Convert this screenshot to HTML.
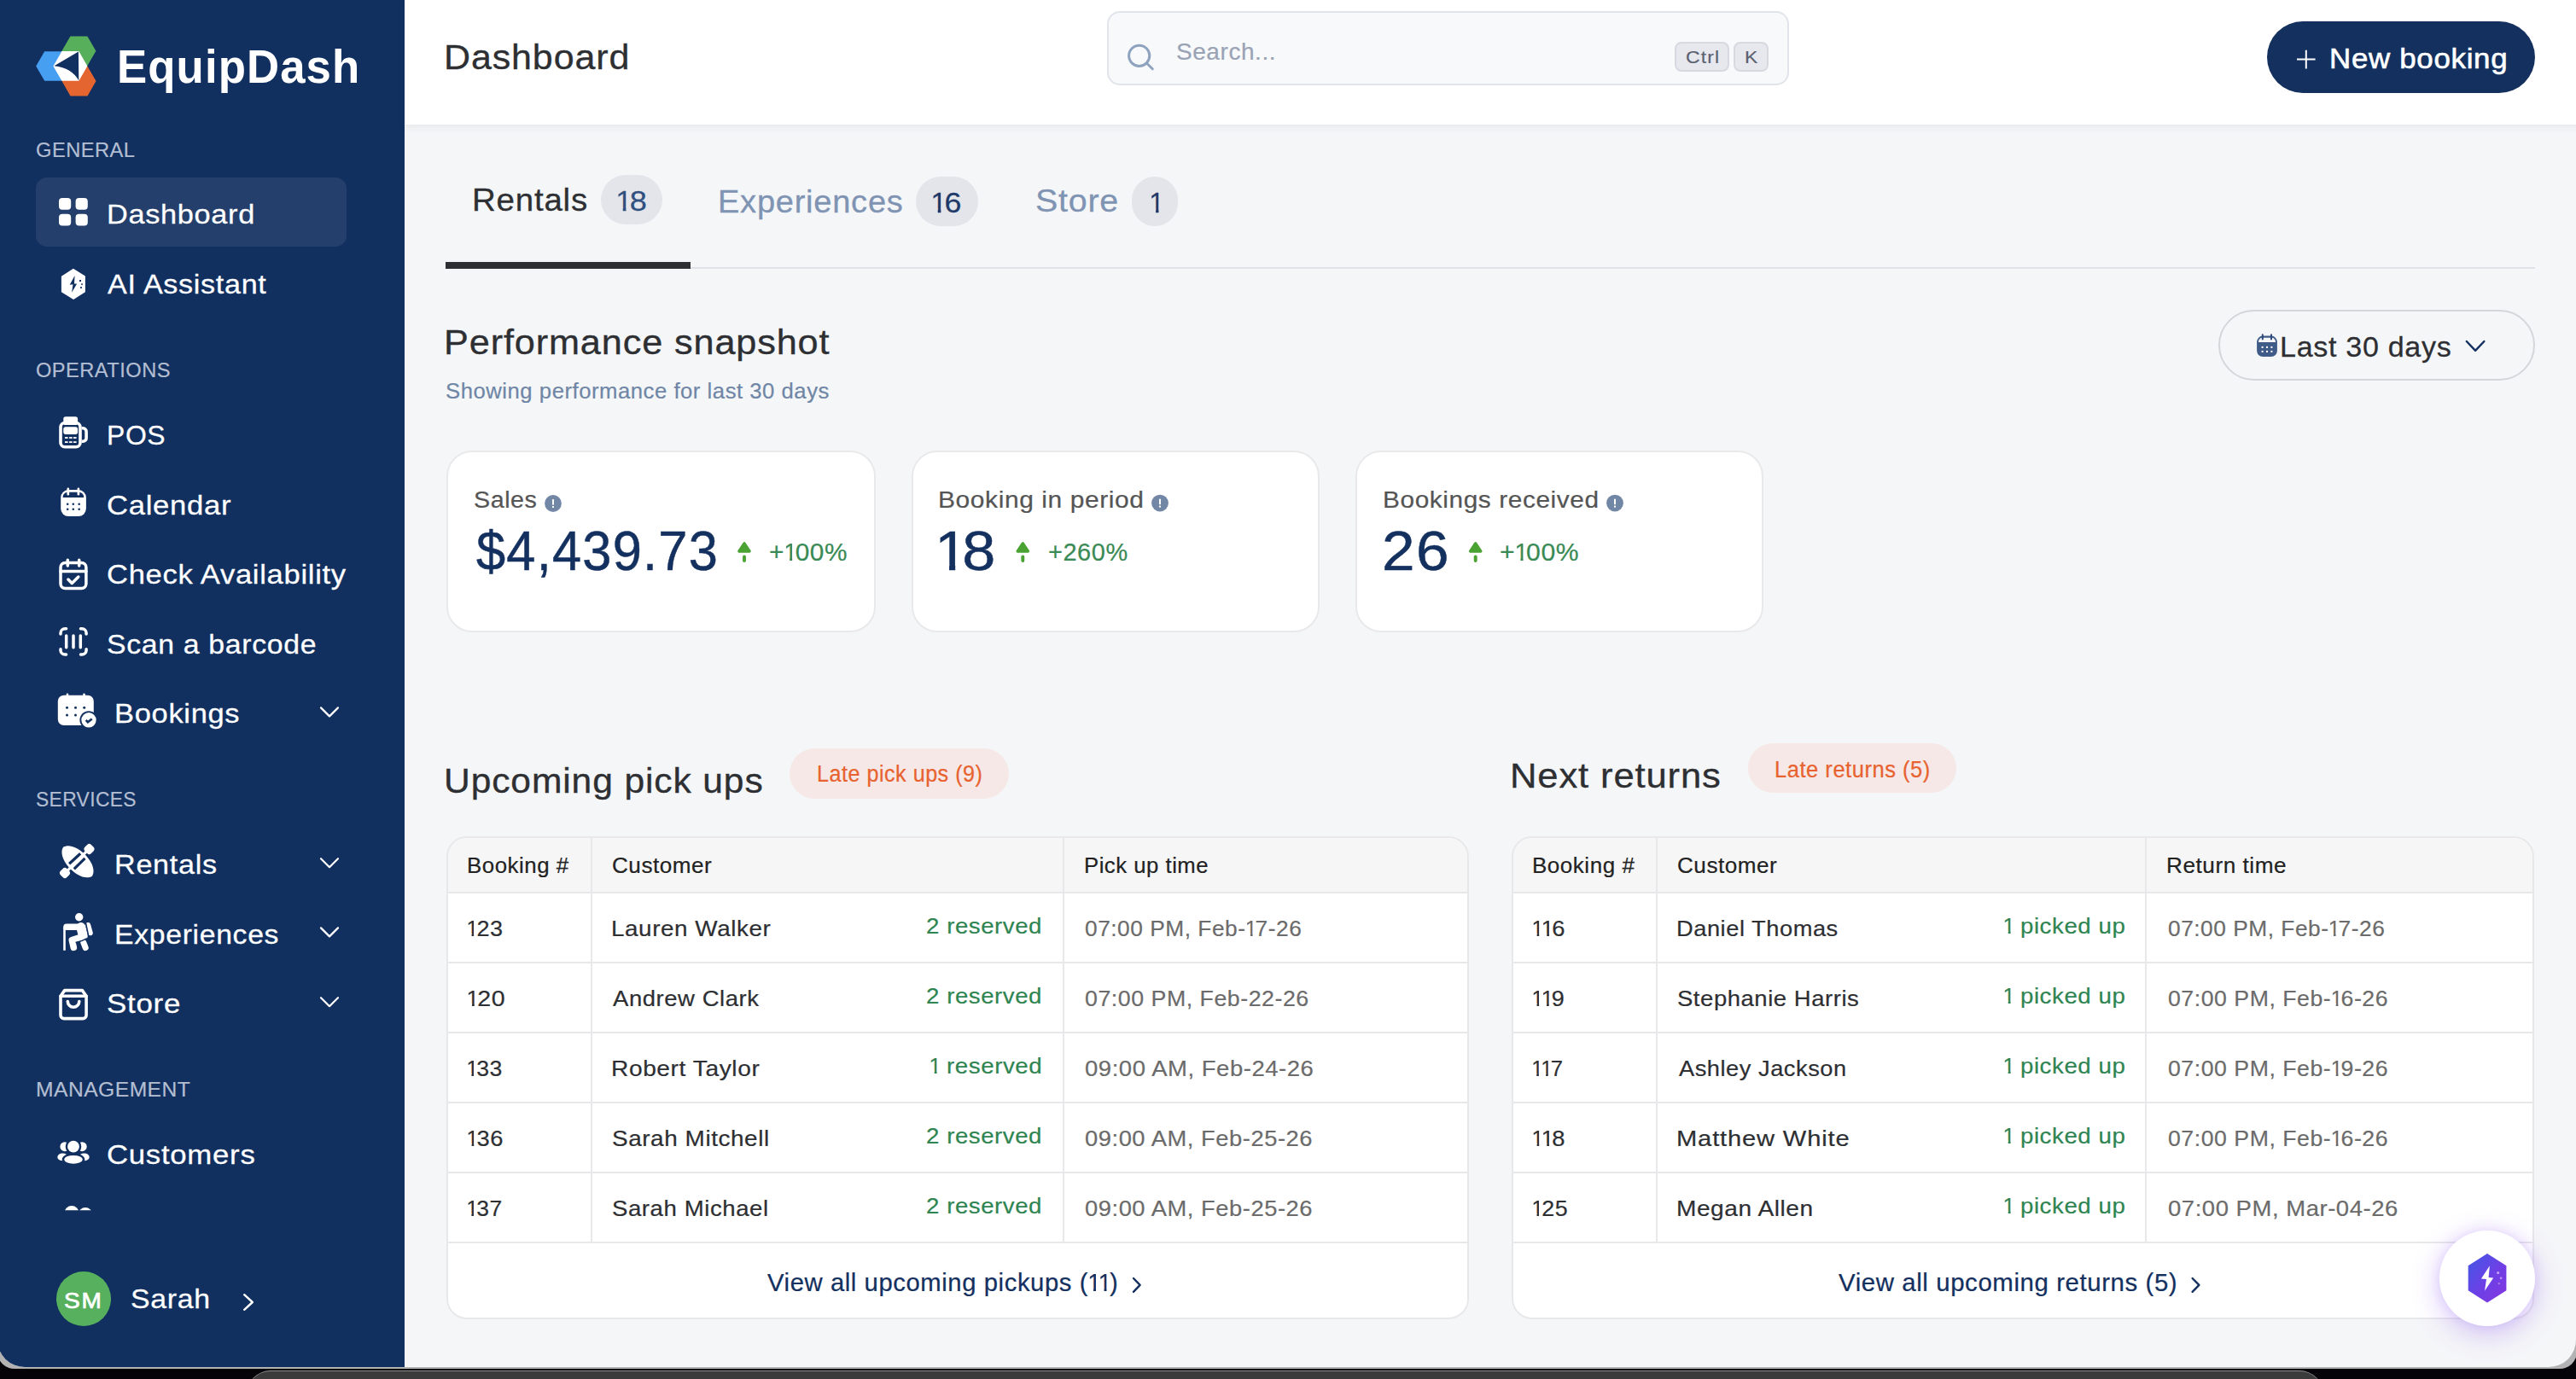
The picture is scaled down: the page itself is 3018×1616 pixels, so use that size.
<!DOCTYPE html>
<html><head><meta charset="utf-8"><title>EquipDash</title>
<style>
*{box-sizing:border-box}
html,body{margin:0;padding:0}
body{width:3018px;height:1616px;overflow:hidden;position:relative;background:#050308;font-family:"Liberation Sans",sans-serif}
.a{position:absolute}
.t{position:absolute;white-space:nowrap;line-height:1;transform-origin:0 50%}
.app{position:absolute;left:-3px;top:0;width:3021.4px;height:1601.5px;overflow:hidden;border-radius:0 0 32px 32px;background:#f5f6f8}
.in{position:absolute;left:3px;top:0;width:3030px;height:1616px}
.o{display:inline-block;clip-path:polygon(0.09em 0,0.345em 0,0.345em 1em,0.243em 1em,0.243em 0.72em,0.09em 0.72em)}
.card{position:absolute;background:#fff;border:2px solid #e9e9eb;border-radius:30px}
.tbl{position:absolute;background:#fff;border:2px solid #e8e8ea;border-radius:24px;overflow:hidden}
.ln{position:absolute;background:#e8e8ea}
.key{position:absolute;background:#e6e8ed;border:2px solid #d6d9e0;border-radius:8px}
.badge{position:absolute;background:#e3e5ea;border-radius:30px}
.pill{position:absolute;background:#f5e8e6;border-radius:30px}
</style></head>
<body>
<div class="a" style="left:289px;top:1605.5px;width:2433px;height:30px;background:#3b3b3b;border-top:1.5px solid #8d8d8d;border-radius:28px 28px 0 0"></div>
<div class="a" style="left:-3px;top:1540px;width:3021.6px;height:63.6px;background:#b3b3b3;border-radius:0 0 20px 20px"></div>
<div class="app"><div class="in">
<!-- sidebar -->
<div class="a" style="left:-3px;top:0;width:477px;height:1602px;background:#12305f"></div>
<div class="a" style="left:42px;top:208px;width:363.5px;height:80.75px;border-radius:13px;background:#243f6b"></div>
<div class="a" style="left:65.8px;top:1489.8px;width:64.2px;height:64.2px;border-radius:50%;background:#57b05e"></div>
<!-- header -->
<div class="a" style="left:474px;top:0;width:2560px;height:145.6px;background:#fff;box-shadow:0 3px 9px rgba(40,50,70,.075)"></div>
<div class="a" style="left:1296.7px;top:13.3px;width:799.3px;height:86.7px;border:2px solid #e1e4ea;background:#f8f9fb;border-radius:15px"></div>
<div class="key" style="left:1961.7px;top:49.3px;width:64.3px;height:35px"></div>
<div class="key" style="left:2031px;top:49.3px;width:41.3px;height:35px"></div>
<div class="a" style="left:2656px;top:25px;width:314px;height:83.6px;border-radius:42px;background:#14305f"></div>
<!-- tabs -->
<div class="a" style="left:522px;top:312.7px;width:2448px;height:2px;background:#dfe2e8"></div>
<div class="a" style="left:522px;top:307px;width:286.7px;height:7.7px;background:#2d2f33"></div>
<div class="badge" style="left:704px;top:205px;width:72.3px;height:57.7px"></div>
<div class="badge" style="left:1073.3px;top:207px;width:73px;height:57.7px"></div>
<div class="badge" style="left:1325.7px;top:206.7px;width:54.3px;height:58.3px"></div>
<div class="a" style="left:2598.5px;top:363.4px;width:371.5px;height:82.6px;border:2px solid #d4d6da;border-radius:42px"></div>
<!-- cards -->
<div class="card" style="left:523.3px;top:527.8px;width:502.5px;height:213.7px"></div>
<div class="card" style="left:1067.8px;top:527.8px;width:478px;height:213.7px"></div>
<div class="card" style="left:1588.2px;top:527.8px;width:477.8px;height:213.7px"></div>
<!-- pills -->
<div class="pill" style="left:924.8px;top:876.6px;width:257.2px;height:59.1px"></div>
<div class="pill" style="left:2047.7px;top:870.7px;width:244.6px;height:58.6px"></div>
<!-- table 1 -->
<div class="tbl" style="left:523.3px;top:980px;width:1197.4px;height:565.7px"></div>
<div class="a" style="left:525.3px;top:982px;width:1193.4px;height:63px;background:#f6f6f7;border-radius:22px 22px 0 0"></div>
<div class="ln" style="left:525.3px;top:1045px;width:1193.4px;height:2px"></div>
<div class="ln" style="left:525.3px;top:1127px;width:1193.4px;height:2px"></div>
<div class="ln" style="left:525.3px;top:1209px;width:1193.4px;height:2px"></div>
<div class="ln" style="left:525.3px;top:1291px;width:1193.4px;height:2px"></div>
<div class="ln" style="left:525.3px;top:1373px;width:1193.4px;height:2px"></div>
<div class="ln" style="left:525.3px;top:1455px;width:1193.4px;height:2px"></div>
<div class="ln" style="left:691.5px;top:982px;width:2px;height:474px"></div>
<div class="ln" style="left:1244.6px;top:982px;width:2px;height:474px"></div>
<!-- table 2 -->
<div class="tbl" style="left:1771px;top:980px;width:1198px;height:565.7px"></div>
<div class="a" style="left:1773px;top:982px;width:1194px;height:63px;background:#f6f6f7;border-radius:22px 22px 0 0"></div>
<div class="ln" style="left:1773px;top:1045px;width:1194px;height:2px"></div>
<div class="ln" style="left:1773px;top:1127px;width:1194px;height:2px"></div>
<div class="ln" style="left:1773px;top:1209px;width:1194px;height:2px"></div>
<div class="ln" style="left:1773px;top:1291px;width:1194px;height:2px"></div>
<div class="ln" style="left:1773px;top:1373px;width:1194px;height:2px"></div>
<div class="ln" style="left:1773px;top:1455px;width:1194px;height:2px"></div>
<div class="ln" style="left:1939.7px;top:982px;width:2px;height:474px"></div>
<div class="ln" style="left:2513.3px;top:982px;width:2px;height:474px"></div>
<!-- texts -->
<div class="t" style="left:136.97px;top:50.94px;font-size:55px;color:#ffffff;letter-spacing:1.100px;font-weight:700;transform:scaleX(0.9603400122746161);">EquipDash</div>
<div class="t" style="left:41.81px;top:164.26px;font-size:24.5px;color:#b3bed2;letter-spacing:0.490px;-webkit-text-stroke:0.2px #b3bed2;transform:scaleX(0.9661991688283569);">GENERAL</div>
<div class="t" style="left:125.19px;top:235.41px;font-size:32px;color:#ffffff;letter-spacing:0.640px;-webkit-text-stroke:0.26px #ffffff;transform:scaleX(1.071796852293494);">Dashboard</div>
<div class="t" style="left:126.18px;top:317.41px;font-size:32px;color:#ffffff;letter-spacing:0.640px;-webkit-text-stroke:0.26px #ffffff;transform:scaleX(1.0665171817786545);">AI Assistant</div>
<div class="t" style="left:41.88px;top:422.26px;font-size:24.5px;color:#b3bed2;letter-spacing:0.490px;-webkit-text-stroke:0.2px #b3bed2;transform:scaleX(0.9645660202229043);">OPERATIONS</div>
<div class="t" style="left:125.39px;top:493.91px;font-size:32px;color:#ffffff;letter-spacing:0.640px;-webkit-text-stroke:0.26px #ffffff;transform:scaleX(0.9959178946758924);">POS</div>
<div class="t" style="left:124.99px;top:575.91px;font-size:32px;color:#ffffff;letter-spacing:0.640px;-webkit-text-stroke:0.26px #ffffff;transform:scaleX(1.0837238111899685);">Calendar</div>
<div class="t" style="left:124.99px;top:657.41px;font-size:32px;color:#ffffff;letter-spacing:0.640px;-webkit-text-stroke:0.26px #ffffff;transform:scaleX(1.0801027698861914);">Check Availability</div>
<div class="t" style="left:125.22px;top:738.91px;font-size:32px;color:#ffffff;letter-spacing:0.640px;-webkit-text-stroke:0.26px #ffffff;transform:scaleX(1.0561789188865478);">Scan a barcode</div>
<div class="t" style="left:134.17px;top:820.41px;font-size:32px;color:#ffffff;letter-spacing:0.640px;-webkit-text-stroke:0.26px #ffffff;transform:scaleX(1.0767770363128888);">Bookings</div>
<div class="t" style="left:41.97px;top:924.76px;font-size:24.5px;color:#b3bed2;letter-spacing:0.423px;-webkit-text-stroke:0.2px #b3bed2;transform:scaleX(0.93);">SERVICES</div>
<div class="t" style="left:134.20px;top:997.16px;font-size:32px;color:#ffffff;letter-spacing:0.640px;-webkit-text-stroke:0.26px #ffffff;transform:scaleX(1.0685458334772646);">Rentals</div>
<div class="t" style="left:134.23px;top:1078.66px;font-size:32px;color:#ffffff;letter-spacing:0.640px;-webkit-text-stroke:0.26px #ffffff;transform:scaleX(1.0547667342799187);">Experiences</div>
<div class="t" style="left:125.16px;top:1160.41px;font-size:32px;color:#ffffff;letter-spacing:0.640px;-webkit-text-stroke:0.26px #ffffff;transform:scaleX(1.092958948396255);">Store</div>
<div class="t" style="left:41.73px;top:1264.76px;font-size:24.5px;color:#b3bed2;letter-spacing:0.490px;-webkit-text-stroke:0.2px #b3bed2;transform:scaleX(1.0046117540037545);">MANAGEMENT</div>
<div class="t" style="left:124.98px;top:1336.91px;font-size:32px;color:#ffffff;letter-spacing:0.640px;-webkit-text-stroke:0.26px #ffffff;transform:scaleX(1.0872896162249719);">Customers</div>
<div class="t" style="left:75.48px;top:1512.34px;font-size:25px;color:#ffffff;letter-spacing:1.624px;-webkit-text-stroke:0.7px #ffffff;transform:scaleX(1.12);">SM</div>
<div class="t" style="left:153.46px;top:1506.41px;font-size:32px;color:#ffffff;letter-spacing:0.640px;-webkit-text-stroke:0.26px #ffffff;transform:scaleX(1.0572217574460838);">Sarah</div>
<div class="t" style="left:520.47px;top:46.99px;font-size:41px;color:#2d2f33;letter-spacing:0.820px;-webkit-text-stroke:0.33px #2d2f33;transform:scaleX(1.0490609218980202);">Dashboard</div>
<div class="t" style="left:1377.73px;top:47.30px;font-size:28px;color:#9aa3b5;letter-spacing:0.560px;-webkit-text-stroke:0.22px #9aa3b5;transform:scaleX(0.9998724652467801);">Search...</div>
<div class="t" style="left:1974.83px;top:56.65px;font-size:20.5px;color:#5a6070;letter-spacing:0.977px;-webkit-text-stroke:0.16px #5a6070;transform:scaleX(1.12);">Ctrl</div>
<div class="t" style="left:2043.82px;top:56.65px;font-size:20.5px;color:#5a6070;letter-spacing:0.000px;-webkit-text-stroke:0.16px #5a6070;transform:scaleX(1.12);">K</div>
<div class="t" style="left:2728.64px;top:52.07px;font-size:33px;color:#ffffff;letter-spacing:0.660px;-webkit-text-stroke:0.6px #ffffff;transform:scaleX(1.056883354533485);">New booking</div>
<div class="t" style="left:552.54px;top:215.98px;font-size:37px;color:#2d2f33;letter-spacing:0.740px;-webkit-text-stroke:0.3px #2d2f33;transform:scaleX(1.04046289544925);">Rentals</div>
<div class="t" style="left:720.53px;top:219.37px;font-size:33px;color:#2f4f80;letter-spacing:0.660px;-webkit-text-stroke:0.26px #2f4f80;transform:scaleX(1.0946944710860762);"><span class="o" style="margin:0 -0.116em 0 0em">1</span>8</div>
<div class="t" style="left:840.88px;top:217.68px;font-size:37px;color:#7f93b3;letter-spacing:0.740px;-webkit-text-stroke:0.3px #7f93b3;transform:scaleX(1.0274040320118563);">Experiences</div>
<div class="t" style="left:1089.86px;top:221.07px;font-size:33px;color:#1f3a68;letter-spacing:0.660px;-webkit-text-stroke:0.26px #1f3a68;transform:scaleX(1.0849382886010923);"><span class="o" style="margin:0 -0.116em 0 0em">1</span>6</div>
<div class="t" style="left:1213.21px;top:217.38px;font-size:37px;color:#7f93b3;letter-spacing:0.740px;-webkit-text-stroke:0.3px #7f93b3;transform:scaleX(1.0638867846200524);">Store</div>
<div class="t" style="left:1345.80px;top:221.07px;font-size:33px;color:#1f3a68;letter-spacing:0.000px;-webkit-text-stroke:0.26px #1f3a68;transform:scaleX(1.0066019417475616);"><span class="o" style="margin:0 0em 0 0em">1</span></div>
<div class="t" style="left:520.45px;top:380.99px;font-size:41px;color:#2d2f33;letter-spacing:0.820px;-webkit-text-stroke:0.33px #2d2f33;transform:scaleX(1.0548213764156615);">Performance snapshot</div>
<div class="t" style="left:521.53px;top:445.29px;font-size:26px;color:#6f86a6;letter-spacing:0.520px;-webkit-text-stroke:0.21px #6f86a6;transform:scaleX(0.9884361853783973);">Showing performance for last 30 days</div>
<div class="t" style="left:2671.20px;top:389.77px;font-size:33px;color:#2d2f33;letter-spacing:0.660px;-webkit-text-stroke:0.26px #2d2f33;transform:scaleX(1.032624064607906);">Last 30 days</div>
<div class="t" style="left:555.40px;top:573.14px;font-size:27px;color:#555555;letter-spacing:0.540px;-webkit-text-stroke:0.22px #555555;transform:scaleX(1.0606587974829478);">Sales</div>
<div class="t" style="left:557.64px;top:613.28px;font-size:65px;color:#14305f;letter-spacing:1.300px;-webkit-text-stroke:0.52px #14305f;transform:scaleX(0.9438641126201501);">$4,439.73</div>
<div class="t" style="left:901.24px;top:632.75px;font-size:29px;color:#3a8a55;letter-spacing:0.580px;-webkit-text-stroke:0.23px #3a8a55;transform:scaleX(1.027658232372813);">+<span class="o" style="margin:0 -0.116em 0 -0.036em">1</span>00%</div>
<div class="t" style="left:1099.24px;top:573.14px;font-size:27px;color:#555555;letter-spacing:0.540px;-webkit-text-stroke:0.22px #555555;transform:scaleX(1.1090217510318525);">Booking in period</div>
<div class="t" style="left:1094.94px;top:613.28px;font-size:65px;color:#14305f;letter-spacing:1.300px;-webkit-text-stroke:0.52px #14305f;transform:scaleX(1.0806239956691697);"><span class="o" style="margin:0 -0.116em 0 0em">1</span>8</div>
<div class="t" style="left:1227.89px;top:632.75px;font-size:29px;color:#3a8a55;letter-spacing:0.580px;-webkit-text-stroke:0.23px #3a8a55;transform:scaleX(0.9969260388063187);">+260%</div>
<div class="t" style="left:1619.86px;top:573.14px;font-size:27px;color:#555555;letter-spacing:0.540px;-webkit-text-stroke:0.22px #555555;transform:scaleX(1.1037363647805418);">Bookings received</div>
<div class="t" style="left:1618.81px;top:613.28px;font-size:65px;color:#14305f;letter-spacing:1.300px;-webkit-text-stroke:0.52px #14305f;transform:scaleX(1.0668719530812498);">26</div>
<div class="t" style="left:1756.83px;top:632.75px;font-size:29px;color:#3a8a55;letter-spacing:0.580px;-webkit-text-stroke:0.23px #3a8a55;transform:scaleX(1.0392049540848671);">+<span class="o" style="margin:0 -0.116em 0 -0.036em">1</span>00%</div>
<div class="t" style="left:520.01px;top:894.69px;font-size:41px;color:#2d2f33;letter-spacing:0.820px;-webkit-text-stroke:0.33px #2d2f33;transform:scaleX(1.0395470474558408);">Upcoming pick ups</div>
<div class="t" style="left:956.64px;top:894.14px;font-size:27px;color:#e8622f;letter-spacing:0.540px;-webkit-text-stroke:0.22px #e8622f;transform:scaleX(0.9311988644438439);">Late pick ups (9)</div>
<div class="t" style="left:1768.73px;top:888.59px;font-size:41px;color:#2d2f33;letter-spacing:0.820px;-webkit-text-stroke:0.33px #2d2f33;transform:scaleX(1.0624746831345848);">Next returns</div>
<div class="t" style="left:2078.60px;top:888.84px;font-size:27px;color:#e8622f;letter-spacing:0.540px;-webkit-text-stroke:0.22px #e8622f;transform:scaleX(0.9459515796083416);">Late returns (5)</div>
<div class="t" style="left:546.88px;top:1001.29px;font-size:26px;color:#222222;letter-spacing:0.520px;-webkit-text-stroke:0.21px #222222;transform:scaleX(0.9952662383707832);">Booking #</div>
<div class="t" style="left:716.97px;top:1001.29px;font-size:26px;color:#222222;letter-spacing:0.520px;-webkit-text-stroke:0.21px #222222;transform:scaleX(1.0035677104816239);">Customer</div>
<div class="t" style="left:1269.59px;top:1001.29px;font-size:26px;color:#222222;letter-spacing:0.520px;-webkit-text-stroke:0.21px #222222;transform:scaleX(0.9879111810659755);">Pick up time</div>
<div class="t" style="left:546.40px;top:1075.29px;font-size:26px;color:#2d2f33;letter-spacing:0.520px;-webkit-text-stroke:0.21px #2d2f33;transform:scaleX(1.0404685252272858);"><span class="o" style="margin:0 -0.116em 0 0em">1</span>23</div>
<div class="t" style="left:716.02px;top:1075.29px;font-size:26px;color:#2d2f33;letter-spacing:0.520px;-webkit-text-stroke:0.21px #2d2f33;transform:scaleX(1.0710093963430523);">Lauren Walker</div>
<div class="t" style="left:1085.31px;top:1071.57px;font-size:26.5px;color:#2f8552;letter-spacing:0.530px;-webkit-text-stroke:0.21px #2f8552;transform:scaleX(1.0422874573401353);">2 reserved</div>
<div class="t" style="left:1270.67px;top:1075.29px;font-size:26px;color:#6b6b6b;letter-spacing:0.520px;-webkit-text-stroke:0.21px #6b6b6b;transform:scaleX(1.0105105675179311);">07:00 PM, Feb-<span class="o" style="margin:0 -0.116em 0 -0.036em">1</span>7-26</div>
<div class="t" style="left:546.25px;top:1157.29px;font-size:26px;color:#2d2f33;letter-spacing:0.520px;-webkit-text-stroke:0.21px #2d2f33;transform:scaleX(1.1003103487016594);"><span class="o" style="margin:0 -0.116em 0 0em">1</span>20</div>
<div class="t" style="left:718.25px;top:1157.29px;font-size:26px;color:#2d2f33;letter-spacing:0.520px;-webkit-text-stroke:0.21px #2d2f33;transform:scaleX(1.0570575907557687);">Andrew Clark</div>
<div class="t" style="left:1085.31px;top:1153.57px;font-size:26.5px;color:#2f8552;letter-spacing:0.530px;-webkit-text-stroke:0.21px #2f8552;transform:scaleX(1.0422874573401353);">2 reserved</div>
<div class="t" style="left:1270.66px;top:1157.29px;font-size:26px;color:#6b6b6b;letter-spacing:0.520px;-webkit-text-stroke:0.21px #6b6b6b;transform:scaleX(1.028054329952925);">07:00 PM, Feb-22-26</div>
<div class="t" style="left:546.44px;top:1239.29px;font-size:26px;color:#2d2f33;letter-spacing:0.520px;-webkit-text-stroke:0.21px #2d2f33;transform:scaleX(1.0245835095749634);"><span class="o" style="margin:0 -0.116em 0 0em">1</span>33</div>
<div class="t" style="left:715.99px;top:1239.29px;font-size:26px;color:#2d2f33;letter-spacing:0.520px;-webkit-text-stroke:0.21px #2d2f33;transform:scaleX(1.08343187738925);">Robert Taylor</div>
<div class="t" style="left:1088.03px;top:1235.57px;font-size:26.5px;color:#2f8552;letter-spacing:0.530px;-webkit-text-stroke:0.21px #2f8552;transform:scaleX(1.0459025693392325);"><span class="o" style="margin:0 -0.116em 0 0em">1</span> reserved</div>
<div class="t" style="left:1270.63px;top:1239.29px;font-size:26px;color:#6b6b6b;letter-spacing:0.520px;-webkit-text-stroke:0.21px #6b6b6b;transform:scaleX(1.0562004335178852);">09:00 AM, Feb-24-26</div>
<div class="t" style="left:546.37px;top:1321.29px;font-size:26px;color:#2d2f33;letter-spacing:0.520px;-webkit-text-stroke:0.21px #2d2f33;transform:scaleX(1.0510585356621716);"><span class="o" style="margin:0 -0.116em 0 0em">1</span>36</div>
<div class="t" style="left:717.03px;top:1321.29px;font-size:26px;color:#2d2f33;letter-spacing:0.520px;-webkit-text-stroke:0.21px #2d2f33;transform:scaleX(1.073709548775972);">Sarah Mitchell</div>
<div class="t" style="left:1085.31px;top:1317.57px;font-size:26.5px;color:#2f8552;letter-spacing:0.530px;-webkit-text-stroke:0.21px #2f8552;transform:scaleX(1.0422874573401353);">2 reserved</div>
<div class="t" style="left:1270.63px;top:1321.29px;font-size:26px;color:#6b6b6b;letter-spacing:0.520px;-webkit-text-stroke:0.21px #6b6b6b;transform:scaleX(1.0510307777815402);">09:00 AM, Feb-25-26</div>
<div class="t" style="left:546.45px;top:1403.29px;font-size:26px;color:#2d2f33;letter-spacing:0.520px;-webkit-text-stroke:0.21px #2d2f33;transform:scaleX(1.0184434999023593);"><span class="o" style="margin:0 -0.116em 0 0em">1</span>37</div>
<div class="t" style="left:717.05px;top:1403.29px;font-size:26px;color:#2d2f33;letter-spacing:0.520px;-webkit-text-stroke:0.21px #2d2f33;transform:scaleX(1.0618015509491925);">Sarah Michael</div>
<div class="t" style="left:1085.31px;top:1399.57px;font-size:26.5px;color:#2f8552;letter-spacing:0.530px;-webkit-text-stroke:0.21px #2f8552;transform:scaleX(1.0422874573401353);">2 reserved</div>
<div class="t" style="left:1270.63px;top:1403.29px;font-size:26px;color:#6b6b6b;letter-spacing:0.520px;-webkit-text-stroke:0.21px #6b6b6b;transform:scaleX(1.0510307777815402);">09:00 AM, Feb-25-26</div>
<div class="t" style="left:898.87px;top:1488.75px;font-size:29px;color:#14305f;letter-spacing:0.580px;-webkit-text-stroke:0.23px #14305f;transform:scaleX(1.0081933439535498);">View all upcoming pickups (<span class="o" style="margin:0 -0.116em 0 -0.036em">1</span><span class="o" style="margin:0 -0.116em 0 -0.036em">1</span>)</div>
<div class="t" style="left:1794.57px;top:1001.29px;font-size:26px;color:#222222;letter-spacing:0.520px;-webkit-text-stroke:0.21px #222222;transform:scaleX(1.000370167798325);">Booking #</div>
<div class="t" style="left:1965.37px;top:1001.29px;font-size:26px;color:#222222;letter-spacing:0.520px;-webkit-text-stroke:0.21px #222222;transform:scaleX(1.0035677104816219);">Customer</div>
<div class="t" style="left:2537.85px;top:1001.29px;font-size:26px;color:#222222;letter-spacing:0.520px;-webkit-text-stroke:0.21px #222222;transform:scaleX(1.0073179923452698);">Return time</div>
<div class="t" style="left:1794.07px;top:1075.29px;font-size:26px;color:#2d2f33;letter-spacing:0.520px;-webkit-text-stroke:0.21px #2d2f33;transform:scaleX(1.0517120209012967);"><span class="o" style="margin:0 -0.116em 0 0em">1</span><span class="o" style="margin:0 -0.116em 0 -0.036em">1</span>6</div>
<div class="t" style="left:1964.47px;top:1075.29px;font-size:26px;color:#2d2f33;letter-spacing:0.520px;-webkit-text-stroke:0.21px #2d2f33;transform:scaleX(1.047542907327563);">Daniel Thomas</div>
<div class="t" style="left:2346.34px;top:1071.57px;font-size:26.5px;color:#2f8552;letter-spacing:0.530px;-webkit-text-stroke:0.21px #2f8552;transform:scaleX(1.0437002142948926);"><span class="o" style="margin:0 -0.116em 0 0em">1</span> picked up</div>
<div class="t" style="left:2539.67px;top:1075.29px;font-size:26px;color:#6b6b6b;letter-spacing:0.520px;-webkit-text-stroke:0.21px #6b6b6b;transform:scaleX(1.010510567517933);">07:00 PM, Feb-<span class="o" style="margin:0 -0.116em 0 -0.036em">1</span>7-26</div>
<div class="t" style="left:1794.11px;top:1157.29px;font-size:26px;color:#2d2f33;letter-spacing:0.520px;-webkit-text-stroke:0.21px #2d2f33;transform:scaleX(1.0367082661285658);"><span class="o" style="margin:0 -0.116em 0 0em">1</span><span class="o" style="margin:0 -0.116em 0 -0.036em">1</span>9</div>
<div class="t" style="left:1965.45px;top:1157.29px;font-size:26px;color:#2d2f33;letter-spacing:0.520px;-webkit-text-stroke:0.21px #2d2f33;transform:scaleX(1.0565069013257882);">Stephanie Harris</div>
<div class="t" style="left:2346.34px;top:1153.57px;font-size:26.5px;color:#2f8552;letter-spacing:0.530px;-webkit-text-stroke:0.21px #2f8552;transform:scaleX(1.0437002142948926);"><span class="o" style="margin:0 -0.116em 0 0em">1</span> picked up</div>
<div class="t" style="left:2539.66px;top:1157.29px;font-size:26px;color:#6b6b6b;letter-spacing:0.520px;-webkit-text-stroke:0.21px #6b6b6b;transform:scaleX(1.0253710170402548);">07:00 PM, Feb-<span class="o" style="margin:0 -0.116em 0 -0.036em">1</span>6-26</div>
<div class="t" style="left:1794.23px;top:1239.29px;font-size:26px;color:#2d2f33;letter-spacing:0.520px;-webkit-text-stroke:0.21px #2d2f33;transform:scaleX(0.9885843372096785);"><span class="o" style="margin:0 -0.116em 0 0em">1</span><span class="o" style="margin:0 -0.116em 0 -0.036em">1</span>7</div>
<div class="t" style="left:1966.65px;top:1239.29px;font-size:26px;color:#2d2f33;letter-spacing:0.520px;-webkit-text-stroke:0.21px #2d2f33;transform:scaleX(1.0464409063875415);">Ashley Jackson</div>
<div class="t" style="left:2346.34px;top:1235.57px;font-size:26.5px;color:#2f8552;letter-spacing:0.530px;-webkit-text-stroke:0.21px #2f8552;transform:scaleX(1.0437002142948926);"><span class="o" style="margin:0 -0.116em 0 0em">1</span> picked up</div>
<div class="t" style="left:2539.66px;top:1239.29px;font-size:26px;color:#6b6b6b;letter-spacing:0.520px;-webkit-text-stroke:0.21px #6b6b6b;transform:scaleX(1.0253710170402548);">07:00 PM, Feb-<span class="o" style="margin:0 -0.116em 0 -0.036em">1</span>9-26</div>
<div class="t" style="left:1794.07px;top:1321.29px;font-size:26px;color:#2d2f33;letter-spacing:0.520px;-webkit-text-stroke:0.21px #2d2f33;transform:scaleX(1.0513177232215958);"><span class="o" style="margin:0 -0.116em 0 0em">1</span><span class="o" style="margin:0 -0.116em 0 -0.036em">1</span>8</div>
<div class="t" style="left:1964.31px;top:1321.29px;font-size:26px;color:#2d2f33;letter-spacing:0.751px;-webkit-text-stroke:0.21px #2d2f33;transform:scaleX(1.12);">Matthew White</div>
<div class="t" style="left:2346.34px;top:1317.57px;font-size:26.5px;color:#2f8552;letter-spacing:0.530px;-webkit-text-stroke:0.21px #2f8552;transform:scaleX(1.0437002142948926);"><span class="o" style="margin:0 -0.116em 0 0em">1</span> picked up</div>
<div class="t" style="left:2539.66px;top:1321.29px;font-size:26px;color:#6b6b6b;letter-spacing:0.520px;-webkit-text-stroke:0.21px #6b6b6b;transform:scaleX(1.0253710170402548);">07:00 PM, Feb-<span class="o" style="margin:0 -0.116em 0 -0.036em">1</span>6-26</div>
<div class="t" style="left:1794.12px;top:1403.29px;font-size:26px;color:#2d2f33;letter-spacing:0.520px;-webkit-text-stroke:0.21px #2d2f33;transform:scaleX(1.0311397171595322);"><span class="o" style="margin:0 -0.116em 0 0em">1</span>25</div>
<div class="t" style="left:1964.40px;top:1403.29px;font-size:26px;color:#2d2f33;letter-spacing:0.520px;-webkit-text-stroke:0.21px #2d2f33;transform:scaleX(1.07967379447105);">Megan Allen</div>
<div class="t" style="left:2346.34px;top:1399.57px;font-size:26.5px;color:#2f8552;letter-spacing:0.530px;-webkit-text-stroke:0.21px #2f8552;transform:scaleX(1.0437002142948926);"><span class="o" style="margin:0 -0.116em 0 0em">1</span> picked up</div>
<div class="t" style="left:2539.63px;top:1403.29px;font-size:26px;color:#6b6b6b;letter-spacing:0.520px;-webkit-text-stroke:0.21px #6b6b6b;transform:scaleX(1.055863182672425);">07:00 PM, Mar-04-26</div>
<div class="t" style="left:2154.17px;top:1488.75px;font-size:29px;color:#14305f;letter-spacing:0.580px;-webkit-text-stroke:0.23px #14305f;transform:scaleX(1.0137526481743595);">View all upcoming returns (5)</div>
<!-- FAB -->
<div class="a" style="left:2858.2px;top:1442.2px;width:111.7px;height:111.7px;border-radius:50%;background:#fff;box-shadow:0 8px 34px rgba(124,58,237,.30),0 0 14px rgba(124,58,237,.12)"></div>
<svg class="a" style="left:0;top:0" width="3018" height="1616" viewBox="0 0 3018 1616">
<defs>
<linearGradient id="fg" x1="0" y1="0" x2="1" y2="1"><stop offset="0" stop-color="#4058e4"/><stop offset=".55" stop-color="#6f3fe6"/><stop offset="1" stop-color="#8436de"/></linearGradient>
<clipPath id="clipnext"><rect x="60" y="1405" width="80" height="13.2"/></clipPath>
</defs>
<!-- logo -->
<g>
<polygon points="42.2,77.5 52.2,60.2 72.2,60.2 82.2,77.5 72.2,94.8 52.2,94.8" fill="#479ff2"/>
<polygon points="72.4,59.75 82.4,42.4 102.4,42.4 112.4,59.75 102.4,77.1 82.4,77.1" fill="#57ae5b"/>
<polygon points="72.5,95.1 82.5,77.8 102.5,77.8 112.5,95.1 102.5,112.4 82.5,112.4" fill="#e56531"/>
<polygon points="62.4,77.4 72.4,60.1 92.4,60.1 102.4,77.4 92.4,94.7 72.4,94.7" fill="#fff"/>
<path d="M63.4,77.3 L91.9,60.6 L92.3,94.6 Q84.5,79.8 63.4,77.3 Z" fill="#12305f"/>
</g>
<!-- dashboard icon -->
<g fill="#fff">
<rect x="69" y="232" width="14.2" height="13.8" rx="4"/><rect x="88.6" y="232" width="14.2" height="13.8" rx="4"/>
<rect x="69" y="250.7" width="14.2" height="13.8" rx="4"/><rect x="88.6" y="250.7" width="14.2" height="13.8" rx="4"/>
</g>
<!-- AI icon -->
<polygon points="85.9,314.8 99.9,323.5 99.9,342.2 86.1,351 71.9,342.2 71.9,323.8" fill="#fff"/>
<polygon points="87.6,323 81.7,333.7 85.5,333.3 84.1,342.8 90.1,332.4 87,332.4" fill="#12305f"/>
<rect x="93" y="328" width="2" height="2" fill="#12305f"/><rect x="95" y="332.1" width="2" height="2" fill="#5a6e93"/><rect x="94" y="336" width="2" height="2" fill="#3a5380"/>
<!-- POS -->
<g>
<rect x="74.3" y="488.2" width="16.8" height="9.8" rx="2.6" fill="#fff"/>
<rect x="71" y="495.5" width="23" height="28.3" rx="5" fill="none" stroke="#fff" stroke-width="3.6"/>
<rect x="74.3" y="500.2" width="16.8" height="8.7" rx="2.6" fill="#fff"/>
<g fill="#fff"><rect x="76" y="512.1" width="3.6" height="1.8"/><rect x="81.1" y="512.1" width="3.6" height="1.8"/><rect x="86" y="512.1" width="3.6" height="1.8"/>
<rect x="76" y="517.2" width="3.6" height="1.8"/><rect x="81.1" y="517.2" width="3.6" height="1.8"/><rect x="86" y="517.2" width="3.6" height="1.8"/></g>
<path d="M95.8,501.8 h1.5 a3.8,3.8 0 0 1 3.8,3.8 v7.8 a3.8,3.8 0 0 1 -3.8,3.8 h-1.5" fill="none" stroke="#fff" stroke-width="3.6"/>
</g>
<!-- Calendar -->
<g>
<rect x="71.2" y="574.1" width="29.7" height="31" rx="9" fill="#fff"/>
<path d="M73.6,583 v-0.6 a5.6,5.6 0 0 1 5.6,-5.6 h13.4 a5.6,5.6 0 0 1 5.6,5.6 v0.6 Z" fill="#12305f"/>
<path d="M79.8,572.9 V579.2 M91.9,572.9 V579.2" stroke="#fff" stroke-width="2.7" stroke-linecap="round"/>
<g fill="#12305f"><circle cx="79.2" cy="590.8" r="1.3"/><circle cx="85.8" cy="590.8" r="1.3"/><circle cx="92.7" cy="590.8" r="1.3"/><circle cx="79.2" cy="596.7" r="1.3"/><circle cx="85.8" cy="596.7" r="1.3"/><circle cx="92.7" cy="596.7" r="1.3"/></g>
</g>
<!-- Check availability -->
<g fill="none" stroke="#fff" stroke-width="3.5" stroke-linecap="round" stroke-linejoin="round">
<rect x="71" y="659.5" width="29.9" height="30.1" rx="5.5"/>
<path d="M71,669.6 H100.9 M79.3,656.2 V663 M92.7,656.2 V663"/>
<path d="M79.9,679 L84.3,683.5 L91.8,676.1"/>
</g>
<!-- Scan -->
<g fill="none" stroke="#fff" stroke-width="3.5" stroke-linecap="round">
<path d="M71,743 V742 A5.2,5.2 0 0 1 76.2,736.8 H77.6"/>
<path d="M94.5,736.8 H95.9 A5.2,5.2 0 0 1 101.1,742 V743"/>
<path d="M71,760.8 V761.8 A5.2,5.2 0 0 0 76.2,767 H77.6"/>
<path d="M94.5,767 H95.9 A5.2,5.2 0 0 0 101.1,761.8 V760.8"/>
<path d="M77.7,745 V758.8 M86,745 V758.8 M94.3,745 V758.8"/>
</g>
<!-- Bookings -->
<g>
<rect x="77.6" y="812.6" width="2.7" height="5" rx="1.3" fill="#fff"/><rect x="97.2" y="812.6" width="2.7" height="5" rx="1.3" fill="#fff"/>
<rect x="67.8" y="814.7" width="42" height="35.4" rx="7" fill="#fff"/>
<g fill="#12305f"><circle cx="78.5" cy="829.2" r="1.5"/><circle cx="88.5" cy="829.2" r="1.5"/><circle cx="98.7" cy="829.2" r="1.5"/><circle cx="78.5" cy="837.9" r="1.5"/><circle cx="88.5" cy="837.9" r="1.5"/></g>
<circle cx="104" cy="843.8" r="10.6" fill="#12305f"/><circle cx="104" cy="843.8" r="8.7" fill="#fff"/>
<path d="M100.7,843.8 L102.9,846.2 L107.7,842.4" fill="none" stroke="#12305f" stroke-width="2.6"/>
</g>
<!-- nav chevrons -->
<g fill="none" stroke="#fff" stroke-width="2.2" stroke-linecap="round" stroke-linejoin="round">
<path d="M376,829.4 L386,839.4 L396,829.4"/>
<path d="M376,1006.2 L386,1016.2 L396,1006.2"/>
<path d="M376,1087.4 L386,1097.4 L396,1087.4"/>
<path d="M376,1169.2 L386,1179.2 L396,1169.2"/>
<path d="M286.2,1517.2 L295.8,1526 L286.2,1534.8" stroke-width="2.4"/>
</g>
<!-- Rentals (kayak) -->
<g>
<path d="M-24,0 C-20,-16 20,-16 24,0 C20,16 -20,16 -24,0 Z" transform="translate(91 1009.8) rotate(45)" fill="#fff"/>
<path d="M81.1,1012.2 L94.2,1000.2 M86.8,1018.3 L99.5,1005.9" stroke="#12305f" stroke-width="3.2" fill="none"/>
<path d="M76.5,1022.8 L104,995.2" stroke="#fff" stroke-width="3.2" fill="none"/>
<rect x="99.3" y="989.8" width="10.4" height="10.4" rx="3.4" transform="rotate(45 104.5 995)" fill="#fff"/>
<rect x="70.8" y="1017.8" width="10.4" height="10.4" rx="3.4" transform="rotate(45 76 1023)" fill="#fff"/>
</g>
<!-- Experiences (hiker) -->
<g fill="none" stroke="#fff" stroke-linecap="round" stroke-linejoin="round">
<circle cx="92.7" cy="1074.8" r="4.7" fill="#fff" stroke="none"/>
<path d="M75.5,1087 V1113.8" stroke-width="2.6" stroke-linecap="butt"/>
<path d="M78,1086.2 H93" stroke-width="7.6"/>
<path d="M94.8,1086.5 L97.4,1096.5" stroke-width="11"/>
<path d="M96,1098 L84.3,1101.6 L86.3,1110.4" stroke-width="7.6"/>
<path d="M97.8,1104.5 L100.2,1110.6" stroke-width="7"/>
<path d="M103.2,1084 L105.8,1093.3" stroke-width="6"/>
<path d="M100.4,1081 L104.2,1099.5" stroke="#12305f" stroke-width="1.5" stroke-linecap="butt"/>
<path d="M88.6,1104.6 Q96,1103 102,1099.6" stroke="#12305f" stroke-width="1.5" stroke-linecap="butt"/>
</g>
<!-- Store -->
<g fill="none" stroke="#fff" stroke-width="3.6" stroke-linejoin="round" stroke-linecap="round">
<path d="M71,1167.3 V1189.6 a4,4 0 0 0 4,4 H97.1 a4,4 0 0 0 4,-4 V1167.3 L96.4,1160.6 H75.7 Z"/>
<path d="M71,1167.3 H101.1"/>
<path d="M79.3,1173.5 a6.75,6.75 0 0 0 13.5,0"/>
</g>
<!-- Customers -->
<g>
<circle cx="75.9" cy="1343.7" r="5.5" fill="#fff"/><circle cx="96.2" cy="1343.7" r="5.5" fill="#fff"/>
<ellipse cx="73.4" cy="1355.9" rx="6.1" ry="4.3" fill="#fff"/><ellipse cx="98.6" cy="1355.9" rx="6.1" ry="4.3" fill="#fff"/>
<circle cx="86" cy="1343.7" r="9.3" fill="#12305f"/><ellipse cx="86" cy="1358.8" rx="13.3" ry="7.4" fill="#12305f"/>
<circle cx="86" cy="1343.7" r="6.9" fill="#fff"/><ellipse cx="86" cy="1358.8" rx="10.8" ry="4.9" fill="#fff"/>
</g>
<g clip-path="url(#clipnext)" fill="#fff"><circle cx="84" cy="1421.5" r="8.5"/><circle cx="100" cy="1423" r="8"/></g>
<!-- search icon -->
<g fill="none" stroke="#8fa3bf" stroke-width="3" stroke-linecap="round"><circle cx="1334.7" cy="65.3" r="12.1"/><path d="M1343.6,74.2 L1350.3,80.8"/></g>
<!-- plus -->
<path d="M2691,69.6 H2712.6 M2701.8,58.8 V80.4" stroke="#fff" stroke-width="2" fill="none"/>
<!-- last 30 days -->
<g>
<rect x="2644.1" y="393.6" width="23.8" height="24.5" rx="7" fill="#3f5b87"/>
<path d="M2646,401 v-0.6 a4.6,4.6 0 0 1 4.6,-4.6 h10.8 a4.6,4.6 0 0 1 4.6,4.6 v0.6 Z" fill="#f5f6f8"/>
<path d="M2650.8,392.3 V397.4 M2661,392.3 V397.4" stroke="#2f4a78" stroke-width="2" stroke-linecap="round"/>
<g fill="#fff"><rect x="2649.6" y="405.9" width="2" height="2"/><rect x="2655" y="405.9" width="2" height="2"/><rect x="2660.4" y="405.9" width="2" height="2"/><rect x="2649.6" y="410.9" width="2" height="2"/><rect x="2655" y="410.9" width="2" height="2"/><rect x="2660.4" y="410.9" width="2" height="2"/></g>
<path d="M2889.8,400 L2900.1,410.8 L2910.4,400" fill="none" stroke="#14305f" stroke-width="2.4" stroke-linecap="round" stroke-linejoin="round"/>
</g>
<!-- info icons -->
<g>
<circle cx="648" cy="590" r="9.9" fill="#7287a5"/><rect x="647" y="585.1" width="2" height="6.5" fill="#fff"/><rect x="647" y="593" width="2" height="2" fill="#fff"/>
<circle cx="1359" cy="589.6" r="9.9" fill="#7287a5"/><rect x="1358" y="584.7" width="2" height="6.5" fill="#fff"/><rect x="1358" y="592.6" width="2" height="2" fill="#fff"/>
<circle cx="1892" cy="589.6" r="9.9" fill="#7287a5"/><rect x="1891" y="584.7" width="2" height="6.5" fill="#fff"/><rect x="1891" y="592.6" width="2" height="2" fill="#fff"/>
</g>
<!-- up arrows -->
<g fill="#4aa232" stroke="#4aa232" stroke-linejoin="round" stroke-linecap="round">
<polygon points="872,637 866,646 878,646" stroke-width="3.6"/><path d="M872,652.4 V657" stroke-width="3.9" fill="none"/>
<polygon points="1198.3,637 1192.3,646 1204.3,646" stroke-width="3.6"/><path d="M1198.3,652.4 V657" stroke-width="3.9" fill="none"/>
<polygon points="1728.7,637 1722.7,646 1734.7,646" stroke-width="3.6"/><path d="M1728.7,652.4 V657" stroke-width="3.9" fill="none"/>
</g>
<!-- footer chevrons -->
<g fill="none" stroke="#14305f" stroke-width="2.4" stroke-linecap="round" stroke-linejoin="round">
<path d="M1328,1498 L1335.6,1505.9 L1328,1513.8"/><path d="M2568.6,1498 L2576.4,1505.9 L2568.6,1513.8"/>
</g>
<!-- FAB hex -->
<polygon points="2914,1469.1 2936.4,1483.3 2936.4,1512.3 2914,1526.5 2891.7,1512.3 2891.7,1483.3" fill="url(#fg)"/>
<polygon points="2916.9,1483.3 2906.9,1498.6 2913,1499.1 2911,1512.8 2921.2,1497.5 2915.6,1497" fill="#fff"/>
<circle cx="2926.7" cy="1491.5" r="1.6" fill="#c5a6f2"/><circle cx="2930.1" cy="1497.8" r="1.4" fill="#b895ee"/><circle cx="2927.8" cy="1504.1" r="1.2" fill="#a882ea"/>
</svg>

</div></div>
</body></html>
